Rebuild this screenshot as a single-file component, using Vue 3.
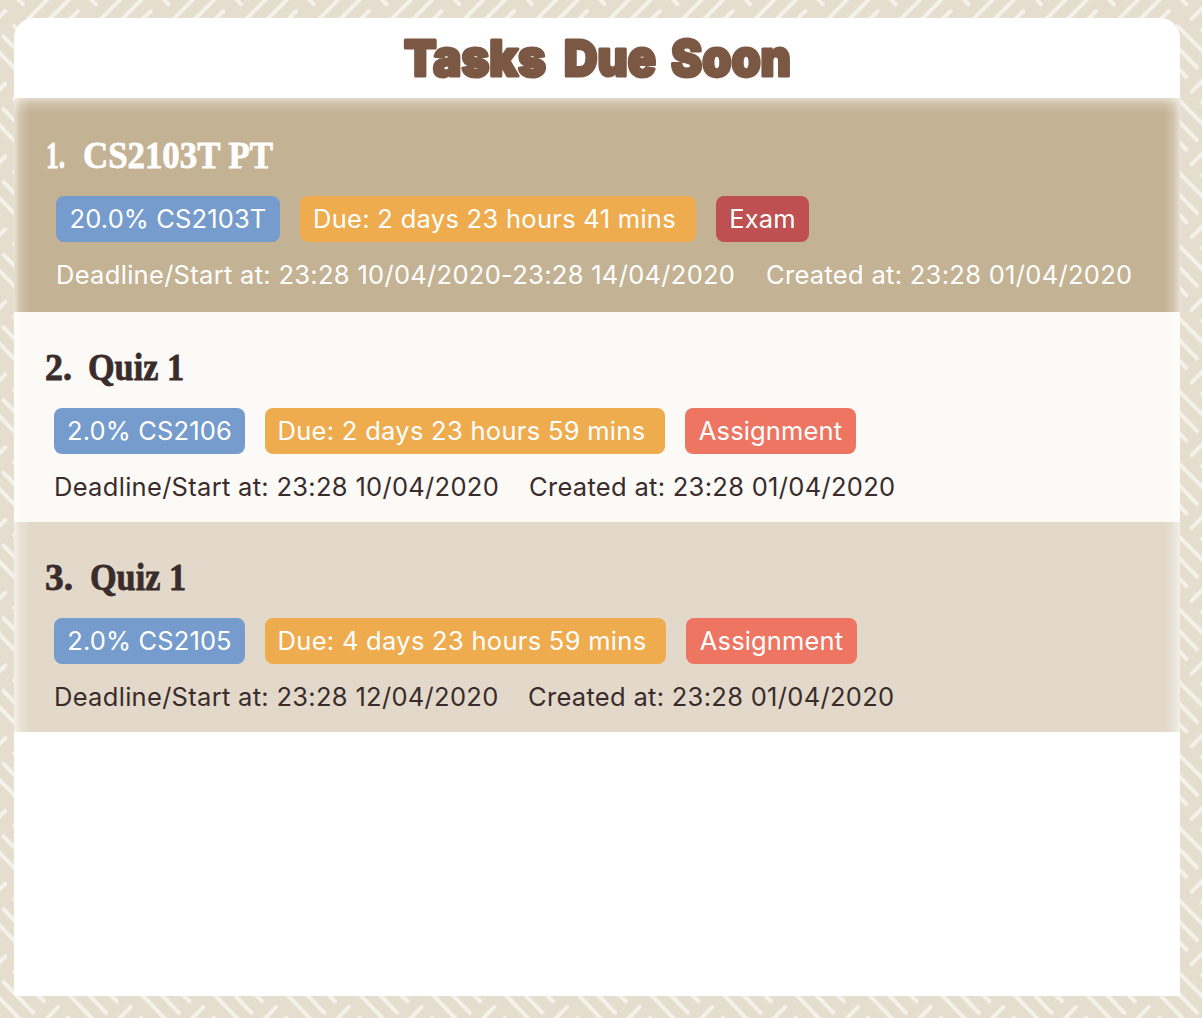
<script setup>
const tasks = [
  {
    no: '1.', noX: 1, noW: 19, title: 'CS2103T PT', titleX: 38, titleW: 190, theme: 'selected',
    tags: [
      { text: '20.0% CS2103T', kind: 'module', width: 224 },
      { text: 'Due: 2 days 23 hours 41 mins', kind: 'due', width: 396 },
      { text: 'Exam', kind: 'exam', width: 93 },
    ],
    start: 'Deadline/Start at: 23:28 10/04/2020-23:28 14/04/2020', startWidth: 710,
    created: 'Created at: 23:28 01/04/2020',
  },
  {
    no: '2.', noX: 0, noW: 27, title: 'Quiz 1', titleX: 43, titleW: 96, theme: 'light',
    tags: [
      { text: '2.0% CS2106', kind: 'module', width: 191 },
      { text: 'Due: 2 days 23 hours 59 mins', kind: 'due', width: 400 },
      { text: 'Assignment', kind: 'assignment', width: 171 },
    ],
    start: 'Deadline/Start at: 23:28 10/04/2020', startWidth: 475,
    created: 'Created at: 23:28 01/04/2020',
  },
  {
    no: '3.', noX: 0, noW: 28, title: 'Quiz 1', titleX: 45, titleW: 96, theme: 'tan',
    tags: [
      { text: '2.0% CS2105', kind: 'module', width: 191 },
      { text: 'Due: 4 days 23 hours 59 mins', kind: 'due', width: 401 },
      { text: 'Assignment', kind: 'assignment', width: 171 },
    ],
    start: 'Deadline/Start at: 23:28 12/04/2020', startWidth: 474,
    created: 'Created at: 23:28 01/04/2020',
  },
]
</script>

<template>
  <main class="page">
    <svg class="weave" width="1202" height="1018" aria-hidden="true">
      <defs>
        <pattern id="weave" width="72.72" height="72.72" patternUnits="userSpaceOnUse">
          <g stroke="#f5f2eb" stroke-width="4" stroke-linecap="round">
            <path d="M14 26L44 56M3.5 36.5L33.5 67.5M-7 46L23 77M65.7 46L95.7 77M-7 -26.7L23 4.3" />
            <path d="M58 -11L28 19M68.5 0L38.5 30M78 11L48 41M5.3 11L-24.7 41M58 61.7L28 91.7M68.5 72.7L38.5 102.7" />
          </g>
        </pattern>
      </defs>
      <rect width="1202" height="1018" fill="url(#weave)" />
    </svg>
    <section class="panel">
      <header class="panel-header">
        <svg width="400" height="76" role="heading">
          <g class="headline">
            <text x="7" y="58" textLength="142" lengthAdjust="spacingAndGlyphs">Tasks</text>
            <text x="167" y="58" textLength="92" lengthAdjust="spacingAndGlyphs">Due</text>
            <text x="274" y="58" textLength="120" lengthAdjust="spacingAndGlyphs">Soon</text>
          </g>
        </svg>
      </header>
      <article v-for="task in tasks" :key="task.no" class="task" :class="task.theme">
        <svg class="title" width="300" height="46">
          <text :x="task.noX" y="32" :textLength="task.noW" lengthAdjust="spacingAndGlyphs">{{ task.no }}</text>
          <text :x="task.titleX" y="32" :textLength="task.titleW" lengthAdjust="spacingAndGlyphs">{{ task.title }}</text>
        </svg>
        <div class="tags">
          <span v-for="tag in task.tags" :key="tag.text" class="tag" :class="tag.kind" :style="{ width: tag.width + 'px' }">{{ tag.text }}</span>
        </div>
        <div class="dates">
          <span :style="{ width: task.startWidth + 'px' }">{{ task.start }}</span>
          <span>{{ task.created }}</span>
        </div>
      </article>
    </section>
  </main>
</template>

<style>
body {
  margin: 0;
}
</style>

<style scoped>
.page {
  position: relative;
  box-sizing: border-box;
  width: 1202px;
  height: 1018px;
  padding: 18px 22px 22px 14px;
  overflow: hidden;
  background: #e5decf;
  font-family: Inter, "Liberation Sans", sans-serif;
}
.weave {
  position: absolute;
  inset: 0;
}
.panel {
  position: relative;
  height: 978px;
  background: #fff;
  border-radius: 20px 20px 0 0;
}
.panel-header {
  display: flex;
  justify-content: center;
  height: 80px;
}
.headline {
  font: 900 50px Inter, sans-serif;
  fill: #7b5844;
  stroke: #7b5844;
  stroke-width: 3px;
  stroke-linejoin: round;
}
.task {
  --edge: rgba(255, 255, 255, 0.6);
  --mid: rgba(255, 255, 255, 0.2);
  box-sizing: border-box;
  height: 210px;
  padding: 36px 0 0 31px;
  color: #3a2c2b;
  background-image:
    linear-gradient(to right, var(--edge), var(--mid) 7px, transparent 16px),
    linear-gradient(to left, var(--edge), var(--mid) 7px, transparent 16px);
}
.selected {
  height: 214px;
  padding-top: 38px;
  color: #fff;
  background-color: #c4b294;
  background-image:
    linear-gradient(to bottom, rgba(255, 255, 255, 0.5), rgba(255, 255, 255, 0.17) 7px, transparent 16px),
    linear-gradient(to right, var(--edge), var(--mid) 7px, transparent 16px),
    linear-gradient(to left, var(--edge), var(--mid) 7px, transparent 16px);
}
.light {
  background-color: #fbfaf6;
}
.tan {
  background-color: #e2d9ca;
}
.title {
  display: block;
  overflow: visible;
  font: bold 38px "Liberation Serif", serif;
  fill: currentColor;
  stroke: currentColor;
  stroke-width: 0.8px;
}
.tags {
  display: flex;
  gap: 20px;
  margin: 14px 0 0 9px;
}
.selected .tags,
.selected .dates {
  margin-left: 11px;
}
.tag {
  display: flex;
  align-items: center;
  justify-content: center;
  box-sizing: border-box;
  height: 46px;
  padding-bottom: 2px;
  border-radius: 8px;
  color: #fff;
  font-size: 25.5px;
  letter-spacing: 0.13px;
  white-space: nowrap;
}
.due {
  padding-right: 7px;
  letter-spacing: 0.29px;
}
.module { background: #769bcd; }
.due { background: #efac4e; }
.exam { background: #bf5051; }
.assignment { background: #ed7562; }
.dates {
  display: flex;
  margin: 17px 0 0 9px;
  font-size: 25.5px;
  line-height: 32px;
  letter-spacing: 0.3px;
  white-space: nowrap;
}
.dates span {
  flex: none;
}
</style>
